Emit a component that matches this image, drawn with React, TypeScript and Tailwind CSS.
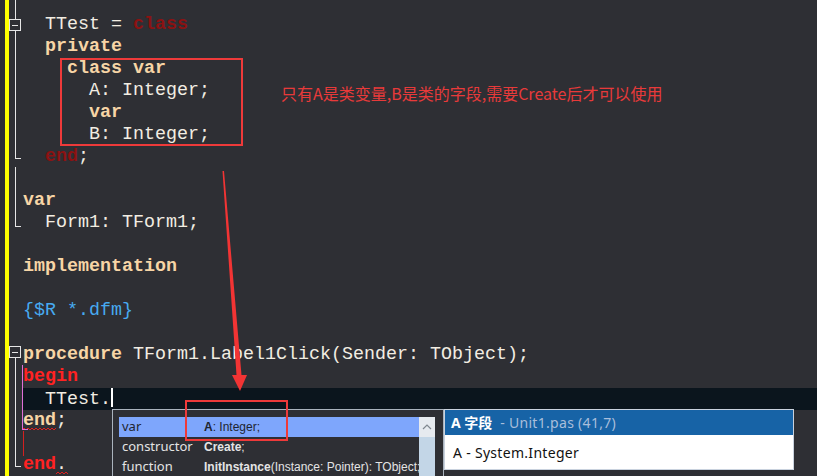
import React from 'react';

type Seg = { t: string; c?: string; b?: boolean };
type Line = { segs: Seg[]; current?: boolean };

const KW = 'text-[#f7d5a6]';
const TX = 'text-[#f2ede2]';
const DARKRED = 'text-[#8c1212]';
const RED = 'text-[#ff2222]';
const DIR = 'text-[#47aaf0]';

const lines: Line[] = [
    { segs: [{ t: '  TTest = ', c: TX }, { t: 'class', c: DARKRED, b: true }] },
    { segs: [{ t: '  private', c: KW, b: true }] },
    { segs: [{ t: '    class var', c: KW, b: true }] },
    { segs: [{ t: '      A: Integer;', c: TX }] },
    { segs: [{ t: '      var', c: KW, b: true }] },
    { segs: [{ t: '      B: Integer;', c: TX }] },
    { segs: [{ t: '  ', c: TX }, { t: 'end', c: DARKRED, b: true }, { t: ';', c: TX }] },
    { segs: [] },
    { segs: [{ t: 'var', c: KW, b: true }] },
    { segs: [{ t: '  Form1: TForm1;', c: TX }] },
    { segs: [] },
    { segs: [{ t: 'implementation', c: KW, b: true }] },
    { segs: [] },
    { segs: [{ t: '{$R *.dfm}', c: DIR }] },
    { segs: [] },
    { segs: [{ t: 'procedure', c: KW, b: true }, { t: ' TForm1.Label1Click(Sender: TObject);', c: TX }] },
    { segs: [{ t: 'begin', c: RED, b: true }] },
    { segs: [{ t: '  TTest.', c: TX }], current: true },
    { segs: [{ t: 'end', c: KW, b: true }, { t: ';', c: TX }] },
    { segs: [] },
    { segs: [{ t: 'end', c: RED, b: true }, { t: '.', c: TX }] },
];

// ── Gutter ──────────────────────────────────────────────────────────────────

const Gutter = () => (
    <svg width="13" height="476" className="shrink-0 overflow-visible relative z-10">
        <g stroke="#e6e6e6" strokeWidth="1" fill="none" shapeRendering="crispEdges">
            <line x1="6.5" y1="0" x2="6.5" y2="19" />
            <rect x="0.5" y="19.5" width="11" height="11" />
            <line x1="3" y1="25.5" x2="9" y2="25.5" />
            <line x1="6.5" y1="31" x2="6.5" y2="159" />
            <line x1="6.5" y1="158.5" x2="12" y2="158.5" />
            <line x1="6.5" y1="167" x2="6.5" y2="227" />
            <line x1="6.5" y1="226.5" x2="12" y2="226.5" />
            <rect x="0.5" y="346.5" width="11" height="11" />
            <line x1="3" y1="352.5" x2="9" y2="352.5" />
            <line x1="6.5" y1="358" x2="6.5" y2="467" />
            <line x1="6.5" y1="466.5" x2="12" y2="466.5" />
        </g>
        <g shapeRendering="crispEdges">
            <line x1="13.5" y1="365" x2="13.5" y2="430" stroke="#e070d8" />
            <line x1="13.5" y1="429.5" x2="19" y2="429.5" stroke="#e070d8" />
            <line x1="14.5" y1="431" x2="14.5" y2="456" stroke="#d42020" />
        </g>
    </svg>
);

const Squiggle = ({ w }: { w: number }) => (
    <svg width={w} height="4" className="absolute left-0 bottom-[1px]">
        <polyline
            fill="none"
            stroke="#e02020"
            strokeWidth="1"
            points={Array.from({ length: Math.ceil(w / 2) + 1 }, (_, i) => `${i * 2},${i % 2 ? 1 : 3}`).join(' ')}
        />
    </svg>
);

// ── Code ────────────────────────────────────────────────────────────────────

const Code = () => (
    <div className="flex flex-col pt-[14px] flex-1 font-['Liberation_Mono',monospace] text-[18.33px]">
        {lines.map((l, i) => (
            <div
                key={i}
                className={`relative h-[22px] leading-[22px] whitespace-pre pl-[1px] ${l.current ? 'bg-[#0b151d]' : ''}`}
            >
                {l.segs.map((s, j) => (
                    <span key={j} className={`${s.c} ${s.b ? 'font-bold' : ''}`}>
                        {s.t}
                    </span>
                ))}
                {l.current && <span className="inline-block w-[2px] h-[19px] bg-white align-[-3px]" />}
                {i === 18 && <Squiggle w={34} />}
                {i === 20 && <span className="absolute left-[34px] bottom-0"><Squiggle w={12} /></span>}
            </div>
        ))}
    </div>
);

// ── Completion popup ────────────────────────────────────────────────────────

const rows = [
    { kind: 'var', name: 'A', rest: ': Integer;', sel: true },
    { kind: 'constructor', name: 'Create', rest: ';' },
    { kind: 'function', name: 'InitInstance', rest: '(Instance: Pointer): TObject;' },
];

const Completion = () => (
    <div className="absolute left-[112px] top-[409px] w-[332px] h-[80px] border border-[#aab3bd] bg-[#2e2f34] flex pt-[7px] pl-[6px] pr-[8px] font-['Noto_Sans',sans-serif] text-[13px]">
        <div className="flex-1 flex flex-col overflow-hidden">
            {rows.map((r) => (
                <div
                    key={r.kind}
                    className={`flex items-center h-[20px] ${r.sel ? 'bg-[#7ea6fc] text-[#1e2530]' : 'text-[#e4e4e4]'}`}
                >
                    <span className="w-[85px] shrink-0 pl-[3px]">{r.kind}</span>
                    <span className="whitespace-pre font-['Liberation_Sans',sans-serif] text-[12px]">
                        <b className="font-bold">{r.name}</b>
                        {r.rest}
                    </span>
                </div>
            ))}
        </div>
        <div className="w-[16px] flex flex-col">
            <div className="h-[20px] bg-[#e6eaef] flex items-center justify-center">
                <svg width="10" height="6" viewBox="0 0 10 6">
                    <polyline points="1,5 5,1 9,5" fill="none" stroke="#808890" strokeWidth="1.2" />
                </svg>
            </div>
            <div className="flex-1 bg-[#c3d6e7]" />
        </div>
    </div>
);

const Hint = () => (
    <div className="absolute left-[444px] top-[409px] w-[350px] h-[61px] border border-[#c9d2de] bg-white flex flex-col font-['Noto_Sans','Noto_Sans_CJK_SC',sans-serif] text-[14px]">
        <div className="h-[25px] bg-[#1763a6] flex items-center pl-[6px] whitespace-pre">
            <span className="font-bold text-white">A 字段</span>
            <span className="text-[#a9bedb] tracking-[0.3px]">  - Unit1.pas (41,7)</span>
        </div>
        <div className="flex-1 flex items-center pl-[8px] text-[#111] whitespace-pre tracking-[0.3px]">A - System.Integer</div>
    </div>
);

const Arrow = () => (
    <svg width="817" height="476" className="absolute left-0 top-0 pointer-events-none">
        <polygon
            points="222.5,171 224,171 241.5,375 247,375 240,391 232,375 236.5,375"
            fill="#f23434"
        />
    </svg>
);

export default function App() {
    return (
        <div className="relative w-[817px] h-[476px] overflow-hidden bg-[#2e2f34] flex">
            <div className="w-[5px] shrink-0" />
            <div className="w-[4px] shrink-0 bg-[#ffff00]" />
            <Gutter />
            <Code />

            {/* annotations */}
            <div className="absolute left-[60px] top-[58px] w-[183px] h-[88px] border-2 border-[#ee3a3a]" />
            <div className="absolute left-[281px] top-[82px] text-[16px] leading-[22px] text-[#e83a3a] font-['Noto_Sans_CJK_SC',sans-serif] whitespace-pre">
                只有A是类变量,B是类的字段,需要Create后才可以使用
            </div>
            <Completion />
            <Hint />
            <div className="absolute left-[185px] top-[400px] w-[103px] h-[41px] border-2 border-[#ee3a3a]" />
            <Arrow />
        </div>
    );
}
